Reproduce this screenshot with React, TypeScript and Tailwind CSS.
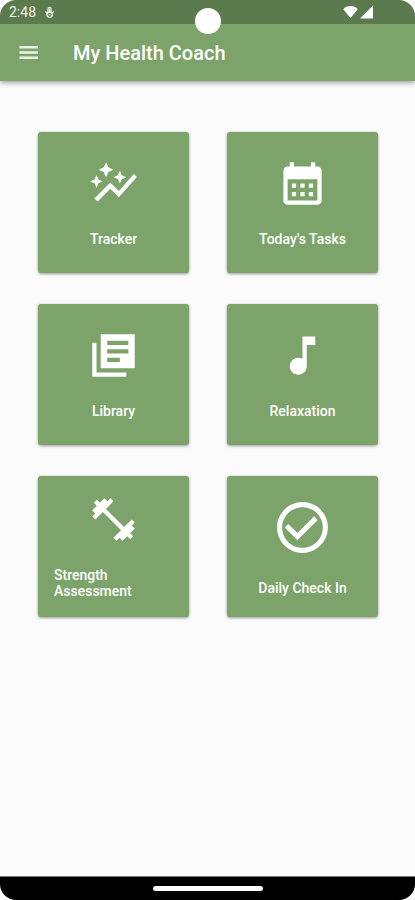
import type { ReactNode } from "react";
import {
  MdAutoGraph,
  MdCalendarMonth,
  MdCheckCircleOutline,
  MdMusicNote,
} from "react-icons/md";

interface Tile {
  label: string;
  icon: ReactNode;
}

function MenuIcon() {
  return (
    <svg viewBox="0 0 25 25" fill="currentColor" width={25} height={25} aria-hidden="true">
      <path d="M3.500 6h18.500v2.600H3.500zM3.500 11.200h18.500v2.600H3.500zM3.500 16.400h18.500V19H3.500z" />
    </svg>
  );
}

function LibraryIcon() {
  return (
    <svg viewBox="0 0 24 24" fill="currentColor" width={51} height={51} aria-hidden="true">
      <path d="M4 6H2v16h16v-2H4V6zm18-4H6v16h16V2zm-3 9H9V9h10v2zm-4 4H9v-2h6v2zm4-8H9V5h10v2z" />
    </svg>
  );
}

function DumbbellIcon() {
  return (
    <svg viewBox="0 0 24 24" fill="currentColor" width={51} height={51} aria-hidden="true">
      <path d="M20.57 14.86 22 13.43 20.57 12 17 15.57 8.43 7 12 3.43 10.57 2 9.14 3.43 7.71 2 5.57 4.14 4.14 2.71 2.71 4.14 4.14 5.57 2 7.71 3.43 9.14 2 10.57 3.43 12 7 8.43 15.57 17 12 20.57 13.43 22 14.86 20.57 16.29 22 18.43 19.86 19.86 21.29 21.29 19.86 19.86 18.43 22 16.29z" />
    </svg>
  );
}

const tiles: Tile[] = [
  { label: "Tracker", icon: <MdAutoGraph size={51} /> },
  { label: "Today's Tasks", icon: <MdCalendarMonth size={51} /> },
  { label: "Library", icon: <LibraryIcon /> },
  { label: "Relaxation", icon: <MdMusicNote size={51} /> },
  { label: "Strength Assessment", icon: <DumbbellIcon /> },
  { label: "Daily Check In", icon: <MdCheckCircleOutline size={61} /> },
];

function StatusBar() {
  return (
    <div className="relative flex h-6 items-center justify-between bg-[#5b7a4d] pr-[42px] pl-[9px] text-[#eef3ea]">
      <div className="flex items-center gap-2">
        <span className="text-sm">2:48</span>
        <svg width="11" height="13" viewBox="0 0 11 13" fill="none" stroke="currentColor" aria-hidden="true">
          <path d="M4 6V2.800a1.500 1.500 0 0 1 3 0V6" strokeWidth="1.300" />
          <path d="M1.300 5.400 3.600 7.400M9.700 5.400 7.400 7.400M5.500 2.400v4" strokeWidth="1.300" />
          <circle cx="5.500" cy="8.700" r="2.700" strokeWidth="1.400" />
          <circle cx="5.500" cy="8.700" r="0.900" fill="currentColor" stroke="none" />
        </svg>
      </div>
      <div className="flex items-center gap-0.5 text-white">
        <svg width="15" height="14" viewBox="0 0 15 14" fill="currentColor" aria-hidden="true">
          <path d="M7.500 13.300.3 4.200C2 2 4.500.9 7.500.9s5.500 1.100 7.200 3.300z" />
        </svg>
        <svg width="13" height="14" viewBox="0 0 13 14" fill="currentColor" aria-hidden="true">
          <path d="M13 .5v13H0z" />
        </svg>
      </div>
      {/* camera cutout */}
      <span className="absolute top-2 left-1/2 z-10 size-[26px] -translate-x-1/2 rounded-full bg-white" />
    </div>
  );
}

function TileButton({ label, icon }: Tile) {
  return (
    <button
      type="button"
      className="flex h-[141px] cursor-pointer flex-col items-center justify-center gap-[22px] rounded-[3px] bg-[#7ca369] px-4 text-white shadow-[0_1px_3px_rgba(0,0,0,0.4)]"
    >
      {icon}
      <span className="text-left text-sm leading-4 font-medium">{label}</span>
    </button>
  );
}

export default function App() {
  return (
    <div className="min-h-screen bg-white font-[Roboto,sans-serif]">
      <div className="flex min-h-screen flex-col overflow-hidden rounded-[16px] bg-[#fafafa]">
        <StatusBar />
        <header className="flex h-[57px] items-center gap-8 bg-[#7ca369] px-4 text-white shadow-[0_2px_5px_rgba(0,0,0,0.35)]">
          <button type="button" aria-label="Open menu" className="cursor-pointer text-[#eef3ea]">
            <MenuIcon />
          </button>
          <h1 className="text-xl font-medium">My Health Coach</h1>
        </header>

        <main className="flex-1 pt-[51px] pr-[37px] pb-8 pl-[38px]">
          <div className="grid grid-cols-2 gap-x-[38px] gap-y-[31px]">
            {tiles.map((tile) => (
              <TileButton key={tile.label} label={tile.label} icon={tile.icon} />
            ))}
          </div>
        </main>

        <footer className="flex h-6 items-center justify-center border-t border-[#777] bg-black">
          <span className="h-[5px] w-[110px] rounded-full bg-white" />
        </footer>
      </div>
    </div>
  );
}
